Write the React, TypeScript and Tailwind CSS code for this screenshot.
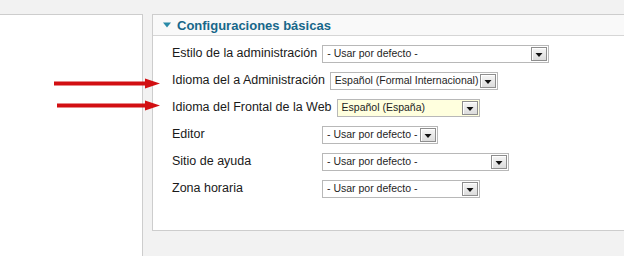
import React from "react";

function Arrow() {
  return (
    <span className="flex h-[14px] w-[16px] items-center justify-center border border-[#8e8e8e] bg-gradient-to-b from-[#f6f6f6] to-[#dcdcdc] shadow-[inset_1px_1px_0_#ffffff]">
      <svg width="8" height="5" viewBox="0 0 8 5" className="mt-[3px]">
        <polygon points="0.5,0 7.5,0 4,4" fill="#111" />
      </svg>
    </span>
  );
}

function Select({ text, w, yellow }: { text: string; w: string; yellow?: boolean }) {
  return (
    <div
      className={`flex h-[18px] items-center justify-between border border-[#b8b8b8] pl-[4px] pr-[1px] ${w} ${
        yellow ? "bg-[#ffffde]" : "bg-white"
      }`}
    >
      <span className="text-[10.5px] leading-none text-[#1e1e1e] whitespace-nowrap">{text}</span>
      <Arrow />
    </div>
  );
}

const rows: { label: string; text: string; w: string; yellow?: boolean }[] = [
  { label: "Estilo de la administración", text: "- Usar por defecto -", w: "w-[227px]" },
  { label: "Idioma del a Administración", text: "Español (Formal Internacional)", w: "w-[168px]" },
  { label: "Idioma del Frontal de la Web", text: "Español (España)", w: "w-[143px]", yellow: true },
  { label: "Editor", text: "- Usar por defecto -", w: "w-[116px]" },
  { label: "Sitio de ayuda", text: "- Usar por defecto -", w: "w-[187px]" },
  { label: "Zona horaria", text: "- Usar por defecto -", w: "w-[158px]" },
];

export default function App() {
  return (
    <div className="relative flex h-[256px] w-[624px] overflow-hidden bg-[#f2f2f2] pt-[14px] font-['Liberation_Sans',Arial,sans-serif]">
      <div className="h-[242px] w-[143px] shrink-0 border-t border-r border-[#cdcdcd] bg-white" />
      <div className="ml-[9px] flex h-[217px] w-[480px] shrink-0 flex-col border border-[#cdcdcd] bg-white">
        <div className="flex h-[21px] items-center gap-[6px] border-b border-[#d6d6d6] bg-[#f9f9f9] pl-[10px]">
          <svg width="8" height="6" viewBox="0 0 8 6">
            <polygon points="0,0.5 8,0.5 4,5.5" fill="#2a8aa8" />
          </svg>
          <span className="text-[13px] font-bold leading-none text-[#17678a]">Configuraciones básicas</span>
        </div>
        <div className="flex flex-col pl-[19px] pt-[4px]">
          {rows.map((r) => (
            <div key={r.label} className="flex h-[27px] items-center gap-[5px]">
              <span className="min-w-[145px] whitespace-nowrap text-[12.5px] leading-none text-[#1a1a1a]">
                {r.label}
              </span>
              <Select text={r.text} w={r.w} yellow={r.yellow} />
            </div>
          ))}
        </div>
      </div>
      <svg className="absolute left-0 top-0" width="170" height="120" viewBox="0 0 170 120">
        <rect x="54" y="81.5" width="94" height="4" fill="#d20f12" />
        <polygon points="145,78.5 160,83.5 145,88.5" fill="#d20f12" />
        <rect x="57" y="103.5" width="91" height="4" fill="#d20f12" />
        <polygon points="145,100.5 160,105.5 145,110.5" fill="#d20f12" />
      </svg>
    </div>
  );
}
